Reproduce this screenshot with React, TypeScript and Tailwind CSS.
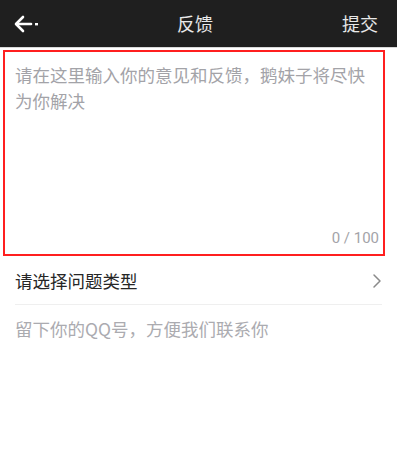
import React from 'react';

const font = { fontFamily: '"Noto Sans CJK SC", "Noto Sans", sans-serif' };

const BackArrow = () => (
  <svg width="28" height="20" viewBox="0 0 28 20" fill="none">
    <path d="M9 3 L2 10 L9 17" stroke="white" strokeWidth="2.6" strokeLinecap="round" strokeLinejoin="round" />
    <path d="M2.5 10 H17" stroke="white" strokeWidth="2.6" strokeLinecap="round" />
    <rect x="21" y="9" width="3" height="2.4" fill="white" />
  </svg>
);

export default function App() {
  return (
    <div className="w-[397px] h-[473px] bg-white" style={font}>
      <div className="h-[48px] bg-[#1f1f1f] flex items-center justify-between pl-[14px] pr-[19px] border-b border-[#d8d8d8]">
        <div className="w-[40px] flex items-center">
          <BackArrow />
        </div>
        <div className="text-white/90 text-[18px] -ml-[2px]">反馈</div>
        <div className="w-[40px] text-right text-white/90 text-[18px]">提交</div>
      </div>
      <div className="ml-[3px] mt-[2px] w-[382px] h-[206px] border-2 border-[#ff1f1f] flex flex-col px-[10px] pt-[10px] pb-[5px]">
        <div className="flex-1 text-[17.5px] leading-[26px] text-[#a3a3a8]">
          请在这里输入你的意见和反馈，鹅妹子将尽快为你解决
        </div>
        <div className="text-right text-[15px] text-[#a3a3a8] -mr-[6px]" style={{ fontFamily: '"Roboto", "Noto Sans", sans-serif' }}>
          0 / 100
        </div>
      </div>
      <div className="ml-[15px] mr-[15px]">
        <div className="h-[49px] flex items-center justify-between border-b border-[#efefef]">
          <span className="text-[17.5px] text-[#262626] pt-[2px]">请选择问题类型</span>
          <svg width="10" height="16" viewBox="0 0 10 16" fill="none" className="mt-[2px]">
            <path d="M2 2 L8 8 L2 14" stroke="#8a8a8a" strokeWidth="1.5" strokeLinecap="round" strokeLinejoin="round" />
          </svg>
        </div>
        <div className="h-[48px] flex items-center text-[17.5px] text-[#ababb0]">
          留下你的QQ号，方便我们联系你
        </div>
      </div>
    </div>
  );
}
